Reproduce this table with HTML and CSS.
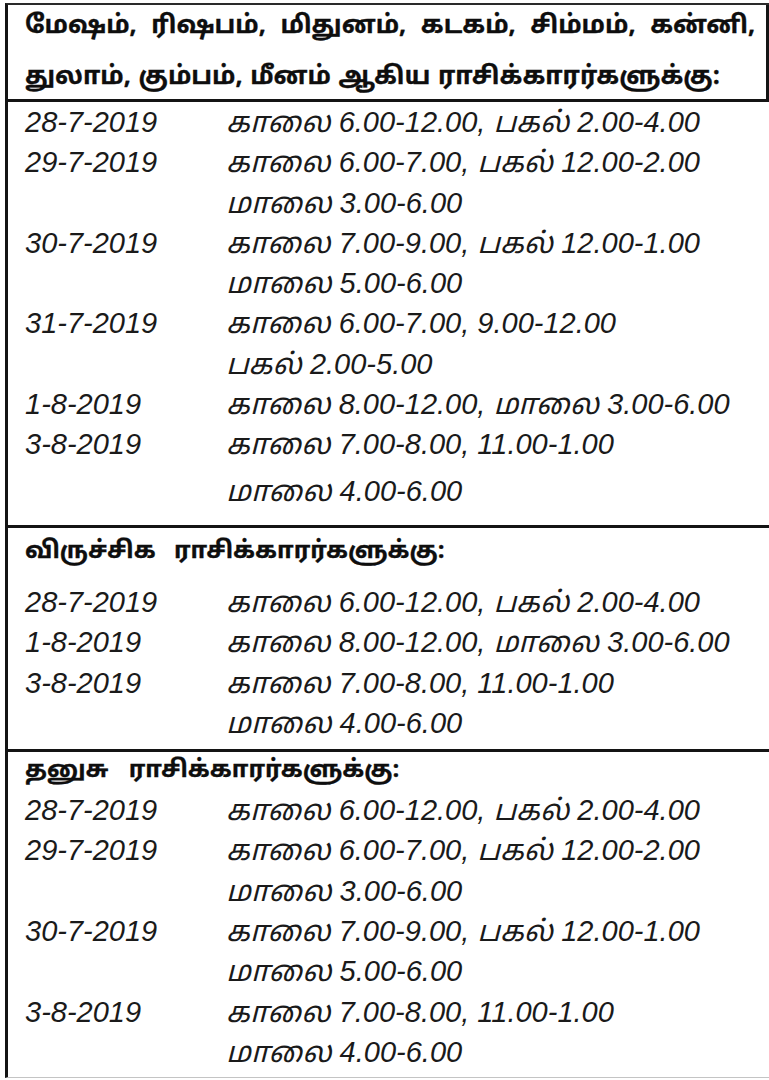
FILE: index.html
```html
<!DOCTYPE html>
<html lang="ta">
<head>
<meta charset="utf-8">
<title>ராசிக்காரர்களுக்கு நேரம்</title>
<link rel="stylesheet" href="styles.css">
</head>
<body>
<div class="sheet">
  <section class="block block-first">
    <h2 class="head head-first"><span class="hl hl-one">மேஷம், ரிஷபம், மிதுனம், கடகம், சிம்மம், கன்னி,</span><span class="hl hl-two">துலாம், கும்பம், மீனம் ஆகிய ராசிக்காரர்களுக்கு:</span></h2>
  </section>
  <section class="block rows rows-first">
    <div class="date">28-7-2019</div><div class="time">காலை 6.00-12.00, பகல் 2.00-4.00</div>
    <div class="date">29-7-2019</div><div class="time">காலை 6.00-7.00, பகல் 12.00-2.00</div>
    <div class="date"></div><div class="time">மாலை 3.00-6.00</div>
    <div class="date">30-7-2019</div><div class="time">காலை 7.00-9.00, பகல் 12.00-1.00</div>
    <div class="date"></div><div class="time">மாலை 5.00-6.00</div>
    <div class="date">31-7-2019</div><div class="time">காலை 6.00-7.00, 9.00-12.00</div>
    <div class="date"></div><div class="time">பகல் 2.00-5.00</div>
    <div class="date">1-8-2019</div><div class="time">காலை 8.00-12.00, மாலை 3.00-6.00</div>
    <div class="date">3-8-2019</div><div class="time">காலை 7.00-8.00, 11.00-1.00</div>
    <div class="date tall"></div><div class="time tall">மாலை 4.00-6.00</div>
  </section>
  <section class="block">
    <h2 class="head head-second">விருச்சிக ராசிக்காரர்களுக்கு:</h2>
    <div class="rows rows-second">
      <div class="date">28-7-2019</div><div class="time">காலை 6.00-12.00, பகல் 2.00-4.00</div>
      <div class="date">1-8-2019</div><div class="time">காலை 8.00-12.00, மாலை 3.00-6.00</div>
      <div class="date">3-8-2019</div><div class="time">காலை 7.00-8.00, 11.00-1.00</div>
      <div class="date"></div><div class="time">மாலை 4.00-6.00</div>
    </div>
  </section>
  <section class="block block-last">
    <h2 class="head head-third">தனுசு ராசிக்காரர்களுக்கு:</h2>
    <div class="rows rows-third">
      <div class="date">28-7-2019</div><div class="time">காலை 6.00-12.00, பகல் 2.00-4.00</div>
      <div class="date">29-7-2019</div><div class="time">காலை 6.00-7.00, பகல் 12.00-2.00</div>
      <div class="date"></div><div class="time">மாலை 3.00-6.00</div>
      <div class="date">30-7-2019</div><div class="time">காலை 7.00-9.00, பகல் 12.00-1.00</div>
      <div class="date"></div><div class="time">மாலை 5.00-6.00</div>
      <div class="date">3-8-2019</div><div class="time">காலை 7.00-8.00, 11.00-1.00</div>
      <div class="date"></div><div class="time">மாலை 4.00-6.00</div>
    </div>
  </section>
</div>
</body>
</html>
```

FILE: styles.css
```css
html, body {
  margin: 0;
  padding: 0;
  background: #ffffff;
}
body {
  width: 769px;
  height: 1080px;
  overflow: hidden;
  color: #151515;
}
.sheet {
  margin-left: 5px;
  margin-top: 3px;
  border-left: 3px solid #141414;
  border-top: 2px solid #2a2a2a;
  border-bottom: 1px solid #c4c4c4;
  height: 1075px;
  box-sizing: border-box;
}
.block {
  border-bottom: 3px solid #141414;
}
.block-first {
  border-right: 3px solid #141414;
  height: 97px;
  box-sizing: border-box;
  overflow: hidden;
}
.block-last {
  border-bottom: none;
}
.head {
  margin: 0;
  padding-left: 17px;
  font-family: "Noto Sans Tamil", "Lohit Tamil", "Noto Sans", "DejaVu Sans", sans-serif;
  font-weight: 700;
  font-size: 25px;
  color: #0e0e0e;
  white-space: nowrap;
  -webkit-text-stroke: 0.3px #0e0e0e;
}
.head-first {
  display: flex;
  flex-direction: column;
  line-height: 51px;
  margin-top: -4px;
}
.hl-one {
  word-spacing: 8px;
}
.hl-two {
  word-spacing: 1px;
}
.head-second {
  font-size: 24px;
  line-height: 48px;
  word-spacing: 12px;
}
.head-third {
  font-size: 24px;
  line-height: 38px;
  word-spacing: 14px;
}
.rows {
  display: grid;
  grid-template-columns: 201px 1fr;
  padding-left: 17px;
  font-family: "Liberation Sans", "Noto Sans Tamil", "Lohit Tamil", sans-serif;
  font-style: italic;
  font-size: 29px;
  line-height: 40.3px;
  color: #1a1a1a;
}
.rows-first {
  padding-bottom: 14px;
}
.rows-second {
  padding-top: 6px;
  padding-bottom: 6px;
}
.date, .time {
  white-space: nowrap;
}
.tall {
  padding-top: 6px;
}
```
